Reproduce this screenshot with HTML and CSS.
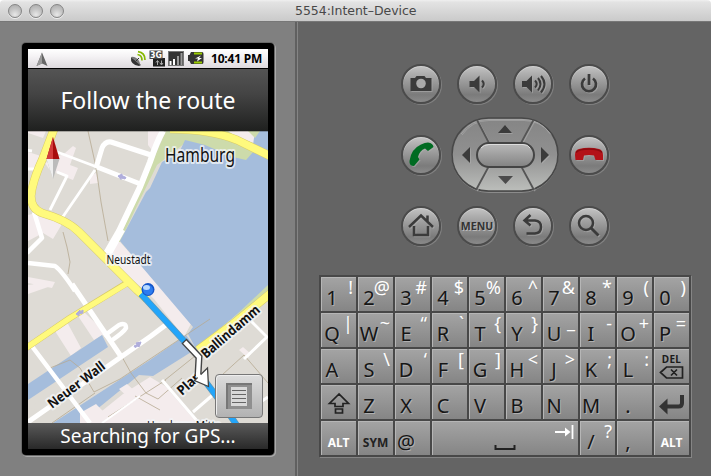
FILE: index.html
```html
<!DOCTYPE html>
<html lang="en">
<head>
<meta charset="utf-8">
<title>5554:Intent-Device</title>
<link rel="stylesheet" href="styles.css">
</head>
<body>
<div class="window">
  <header class="titlebar">
    <div class="lights"><i></i><i></i><i></i></div>
    <span class="title">5554:Intent–Device</span>
  </header>
  <main class="content">
    <section class="left">
      <div class="phone">
        <div class="status">
          <svg class="nav-icon" width="12" height="15" viewBox="0 0 12 15"><path d="M6 .5 11.500 14 6 11.500 .5 14Z" fill="#666"/><path d="M6 .5V11.500L.5 14Z" fill="#999"/></svg>
          <svg class="status-icons" width="74" height="18" viewBox="130 50 74 18">
            <path d="M131 57q-1 8 8 9l2-1z" fill="#333"/><path d="M131 57l9 8q0-4-3-6.500-3-2.500-6-1.500z" fill="#777"/><path d="M136 61l3-3" stroke="#333"/>
            <g fill="none" stroke="#86b800" stroke-width="1.700"><path d="M137.500 54.500q4.500.5 4.500 6"/><path d="M138 51.700q7 .8 7 8.300"/></g>
            <rect x="153" y="58" width="12" height="8.500" fill="#222"/><rect x="149.500" y="50.500" width="13" height="8.500" fill="#444"/>
            <text x="150" y="58" class="g3" textLength="12" lengthAdjust="spacingAndGlyphs">3G</text>
            <path d="M157.500 65v-4m-1.500 1.500 1.500-2 1.500 2M161.500 60.500v4m-1.500-1.500 1.500 2 1.500-2" stroke="#aaa" fill="none"/>
            <rect x="168" y="51" width="16" height="15" fill="#333"/><rect x="168.500" y="51.500" width="15" height="14" fill="none" stroke="#777"/>
            <path d="M169.500 61h2v4h-2zM173 59h2v6h-2z" fill="#fff"/><path d="M177 56h2v9h-2zM180.500 53h2v12h-2z" fill="#999"/>
            <path d="M191 52h11q1.500 0 1.500 2v8q0 2-1.500 2h-11l-1.500-3h-1.500v-6h1.500z" fill="#333"/><path d="M194 53.500h8M194 62.500h8" stroke="#9c0" stroke-width="2"/><path d="M201 55.500l-6 3h3l-1 3 5-3.500h-3z" fill="#fff"/>
          </svg>
          <span class="clock">10:41 PM</span>
        </div>
        <div class="instruction"><span>Follow the route</span></div>
        <div class="mapwrap">
        <svg class="map" width="240" height="292" viewBox="28 131 240 292">
          <rect x="28" y="131" width="240" height="292" fill="#dedbd5"/>
          <g fill="#f4eced">
            <path d="M28 131h18l-3 7-15-5zM28 152l13 4-5 14-8-2zM45 163l20-10 8-7 3 2-6 17 8 3-5 12-10-4-14-7zM28 215l8-2 16 3 10 8-9 15-10-6-15 8zM90 176l6-3 2 10-8 1zM28 277l27 5-3 6-24-5zM118 240l2 2 72 80-8 15-30-38-50-45zM148 145v-14h16l-10 22zM55 331l12-9 14 26-10 8zM78 316l6-4 22 21-12 7zM123 394l27-17 15 9 32 37H87zM28 285l15-2 8 3-23 8z"/>
          </g>
          <path d="M166 131h102v36l-25-6-58-18-28 22-22 45-15 32-2 0 21-50z" fill="#cddbab"/>
          <path d="M185 140l20 5 28 12 13 3 9-10 13 6v132l-72 61-8-15 5-7-73-86 26-49 4-4 12-26 17-9z" fill="#a5bddc"/>
          <path d="M228 131h32l-6 12-16-5z" fill="#f4eced"/><path d="M255 131h13v21l-15-7z" fill="#a5bddc"/><path d="M248 131h12l-5 7z" fill="#cddbab"/>
          <path d="M28 384l74-49 6 12-80 53zM53 423l97-63 36-25 10 14-43 27-14-1-59 48z" fill="#a5bddc"/>
          <path d="M28 408l45-28 11-3 8 9-40 27z" fill="#dedbd5"/>
          <path d="M197 346l36-28 35-33v12l-65 55z" fill="#cddbab"/>
          <path d="M119 389l8-5 10 9-8 5zM80 413l16-9 12 12-8 7H80zM239 350l4-3 8 7-3 4z" fill="#f4eced"/>
          <path d="M88 131l8 36 5 35 7 39M63 232l4 15 3 15-2 12M50 368l20-8 10 8 14 24 26-13 90-60M108 417l58-37M121 355l10 18 15 20 12 6 24-21M52 423l43-30M222 375l22-20 24 28M160 410l-25-14M165 380l30-24" fill="none" stroke="#b6aa92" stroke-width=".8"/>
          <g fill="none" stroke="#fff" stroke-width="4" stroke-linejoin="round">
            <path d="M96 168l6-20q3-7 9-6l43 14M97 167l46 18" stroke-width="5"/>
            <path d="M26 150l6 1M57 152l40 15M26 169h11M57 172l10 4-17 34M95 170l-33 48" stroke-width="2.800"/>
            <path d="M28 263l27 3q7 5 20 25M34 212l8 26-15 15M31 345l59 78" stroke-width="4.500"/>
            <path d="M72 284l48 71M28 422l123-86 16-12" stroke-width="5"/>
            <path d="M104 336l15-11q7-3 7 3-2 4-15 13" stroke-width="4.500"/>
            <path d="M102 423l38-27" stroke-width="2"/>
            <path d="M162 380l36 42M193 412l22-19M244 359l24-23M251 321l17 17M262 401l6-4" stroke-width="3"/>
          </g>
          <path d="M163 131q-6 10-13 31l-10 25-21 44-15 26" fill="none" stroke="#fff" stroke-width="6"/>
          <path d="M102 258l17-30 6 3-14 25z" fill="#fff"/>
          <g fill="none" stroke-linejoin="round">
            <g stroke="#d9cc68"><path d="M54 129 43 158Q32 182 31 196 31 209 42 213 67 220 79 232L137 290 147 299" stroke-width="8.500"/><path d="M26 348 70 318 127 283" stroke-width="6.500"/><path d="M170 129q40 0 67 11l33 16M198 350l35-26 38-31" stroke-width="8.500"/></g>
            <g stroke="#fffa7d"><path d="M54 129 43 158Q32 182 31 196 31 209 42 213 67 220 79 232L137 290 147 299" stroke-width="7.500"/><path d="M26 348 70 318 131 281" stroke-width="5.500"/><path d="M170 129q40 0 67 11l33 16M198 350l35-26 38-31" stroke-width="7.500"/></g>
          </g>
          <path d="M118 176l4-2v1.500l4 2-1 1.500-4-1v1.500zM76 314l4-4v2l3-2v3l-4 1v2zM141 342l-5 1 1 1.500-3 1.500 1 1.500 3-1.500 1 1z" fill="#afaddb" stroke="#afaddb"/>
          <path d="M141 294l44 48M205 381l18 24 15 22" stroke="#5999bd" stroke-width="6.500" fill="none"/>
          <path d="M141 294l44 48M205 381l18 24 15 22" stroke="#22a5fa" stroke-width="5" fill="none"/>
          <g class="label"><text class="city" x="165" y="162" textLength="70" lengthAdjust="spacingAndGlyphs">Hamburg</text>
          <text class="area" x="106.500" y="264" textLength="44" lengthAdjust="spacingAndGlyphs">Neustadt</text>
          <text class="street" transform="translate(52 409) rotate(-37)" textLength="68" lengthAdjust="spacingAndGlyphs">Neuer Wall</text>
          <text class="street" transform="translate(206 359) rotate(-41)" textLength="73" lengthAdjust="spacingAndGlyphs">Ballindamm</text>
          <text class="street" transform="translate(182 396) rotate(-42)" textLength="28" lengthAdjust="spacingAndGlyphs">Plan</text>
          <text class="area" x="147" y="430" textLength="74" lengthAdjust="spacingAndGlyphs">Hamburg Mitte</text></g>
          <path d="M184 341l15 16-1 18" fill="none" stroke="#444" stroke-width="7"/><path d="M208.500 386.500l-14-6 13-12.500z" fill="#fff" stroke="#444" stroke-width="1.300"/><path d="M184.800 342l14.200 15-1 18 4 4" fill="none" stroke="#fff" stroke-width="4.200"/>
          <circle cx="148" cy="289.500" r="6.500" fill="#1455c9"/><circle cx="148" cy="290" r="5" fill="#2c7cf0"/><ellipse cx="146.500" cy="287.500" rx="3.500" ry="2.500" fill="#b9daff"/>
          <path d="M53 137l-6.500 22h13z" fill="#a80d0d"/><path d="M53 137l-6.500 22H53z" fill="#d23c3c"/><path d="M46.500 159h13L53 179z" fill="#bbb"/><path d="M46.500 159H53v20z" fill="#eee"/>
          <path d="M28 131.500h240" stroke="#000" stroke-opacity=".25"/>
        </svg>
        <div class="list-button"><svg width="26" height="26" viewBox="0 0 26 26"><path d="M0 0h26v26H0z" fill="#8f8f8f"/><path d="M1 26V1H26" fill="none" stroke="#777" stroke-width="2"/><path d="M5 4h16v19H5z" fill="#d9d9d9"/><path d="M6 7.500h14M6 11.500h14M6 15.500h14M6 19.500h14" stroke="#666" stroke-width="1.200"/></svg></div>
        </div>
        <div class="gps"><span>Searching for GPS...</span></div>
      </div>
    </section>
    <section class="right">
      <div class="controls">
        <div class="round"><svg viewBox="0 0 40 40"><path d="M9.500 14h4.500l1.500-2h8l1.500 2h5.500v13H9.500z" fill="#3b3b3b"/><circle cx="20" cy="19.500" r="4.800" fill="#aaa"/></svg></div>
        <div class="round"><svg viewBox="0 0 40 40"><path d="M12.500 17h4.500l5.500-5.500v17L17 23h-4.500z" fill="#3b3b3b"/><path d="M25 16.500q3.500 3.500 0 7" fill="none" stroke="#3b3b3b" stroke-width="2"/></svg></div>
        <div class="round"><svg viewBox="0 0 40 40"><path d="M9 17h4.500l5.500-5.500v17L13.500 23H9z" fill="#3b3b3b"/><path d="M22 16.500q3.500 3.500 0 7M25 14q5 6 0 12.500M28 12q7 8 0 16.500" fill="none" stroke="#3b3b3b" stroke-width="2"/></svg></div>
        <div class="round"><svg viewBox="0 0 40 40"><path d="M16 14.500a7 7 0 1 0 8 0M20 10v11" fill="none" stroke="#3b3b3b" stroke-width="2.700"/></svg></div>

        <div class="round"><svg viewBox="0 0 40 40"><path d="M27 7.500Q32 8 32.500 12L27 16 24 13.500Q18.500 15.500 17 22L18.500 24.500 13 31Q8 31 8.500 26 10 14 20 9.500 24 7.500 27 7.500Z" fill="#006b22"/></svg></div>
        <div class="dpad"><svg width="108" height="76" viewBox="0 0 108 76">
          <defs><linearGradient id="ring" x1="0" y1="0" x2="0" y2="1"><stop offset="0" stop-color="#858585"/><stop offset=".5" stop-color="#909090"/><stop offset="1" stop-color="#bcbebb"/></linearGradient><linearGradient id="pill" x1="0" y1="0" x2="0" y2="1"><stop offset="0" stop-color="#bbb"/><stop offset="1" stop-color="#828282"/></linearGradient></defs>
          <rect x="1" y="1.500" width="106" height="74" rx="37" fill="none" stroke="#8b8b8b"/>
          <rect x="1" y="1" width="106" height="73" rx="36.500" fill="url(#ring)" stroke="#484848" stroke-width="1.600"/>
          <path d="M10 17Q20 2.500 37 2.500h35q17 0 27 14" fill="none" stroke="#a5a5a5"/>
          <path d="M26 3l12 23M82.500 3L70 26M38 49L25 73M70 49l13 24" stroke="#555" stroke-width="1.800"/>
          <rect x="26" y="26" width="57" height="24" rx="12" fill="url(#pill)" stroke="#444" stroke-width="2"/>
          <path d="M30 31q3-3.500 8-3.500h34q5 0 7 3.500" fill="none" stroke="#ddd"/>
          <path d="M47 16l7-8 7 8zM11 38l8-8v16zM98 38l-8-8v16z" fill="#3b3b3b"/><path d="M47 59h15l-7.500 8z" fill="#4b4b4b"/>
        </svg></div>
        <div class="round c4"><svg viewBox="0 0 40 40"><path d="M6 20q0-5 4-6 10-2.500 20 0 4 1 4 6.500v4.500h-7.500L25 20.500q-5-1-10 0L14 25H6.500z" fill="#b31218"/><path d="M7 17.500q3-3.500 13-3.500t13 3.500" fill="none" stroke="#8b0c10" stroke-width="1.500"/></svg></div>

        <div class="round"><svg viewBox="0 0 40 40"><path d="M8 21l12-11.500L32 21M13 20v9h14v-9M26.500 9.500v6" fill="none" stroke="#3b3b3b" stroke-width="2.500"/></svg></div>
        <div class="round"><span class="menu">MENU</span></div>
        <div class="round"><svg viewBox="0 0 40 40"><path d="M13.500 27.500H22q6-.5 6-6.500 0-6-6-6.500H12M17.500 9l-6 5.500 6 5" fill="none" stroke="#3b3b3b" stroke-width="2.500"/></svg></div>
        <div class="round"><svg viewBox="0 0 40 40"><circle cx="17" cy="17" r="7" fill="none" stroke="#3b3b3b" stroke-width="2.500"/><path d="M22 22l7.500 7.500" stroke="#3b3b3b" stroke-width="3"/></svg></div>
      </div>

      <div class="keyboard">
        <div class="key"><b>1</b><i>!</i></div><div class="key"><b>2</b><i>@</i></div><div class="key"><b>3</b><i>#</i></div><div class="key"><b>4</b><i>$</i></div><div class="key"><b>5</b><i>%</i></div><div class="key"><b>6</b><i>^</i></div><div class="key"><b>7</b><i>&amp;</i></div><div class="key"><b>8</b><i>*</i></div><div class="key"><b>9</b><i>(</i></div><div class="key"><b>0</b><i>)</i></div>
        <div class="key"><b>Q</b><i>|</i></div><div class="key"><b>W</b><i>~</i></div><div class="key"><b>E</b><i>“</i></div><div class="key"><b>R</b><i>`</i></div><div class="key"><b>T</b><i>{</i></div><div class="key"><b>Y</b><i>}</i></div><div class="key"><b>U</b><i class="raise">_</i></div><div class="key"><b>I</b><i>-</i></div><div class="key"><b>O</b><i>+</i></div><div class="key"><b>P</b><i>=</i></div>
        <div class="key"><b>A</b></div><div class="key"><b>S</b><i>\</i></div><div class="key"><b>D</b><i>‘</i></div><div class="key"><b>F</b><i>[</i></div><div class="key"><b>G</b><i>]</i></div><div class="key"><b>H</b><i>&lt;</i></div><div class="key"><b>J</b><i>&gt;</i></div><div class="key"><b>K</b><i>;</i></div><div class="key"><b>L</b><i>:</i></div>
        <div class="key del"><span>DEL</span><svg width="25" height="13" viewBox="0 0 25 13"><path d="M1.500 6.500l6-5.500H23.500v11H7.500zM12 3.500l6 6M18 3.500l-6 6" fill="none" stroke="#222" stroke-width="1.700"/></svg></div>
        <div class="key"><svg width="35" height="34" viewBox="0 0 35 34"><path d="M18 9l-9.500 9.500H14v3h8v-3h5.500zM14.500 24h7v4h-7z" fill="none" stroke="#222" stroke-width="1.700"/></svg></div><div class="key"><b>Z</b></div><div class="key"><b>X</b></div><div class="key"><b>C</b></div><div class="key"><b>V</b></div><div class="key"><b>B</b></div><div class="key"><b>N</b></div><div class="key"><b>M</b></div><div class="key"><b>.</b></div><div class="key"><svg width="35" height="34" viewBox="0 0 35 34"><path d="M28 10v8q0 3.500-3.500 3.500H12" fill="none" stroke="#333" stroke-width="4"/><path d="M5 21.500l8.500-8v16z" fill="#333"/></svg></div>
        <div class="key word white"><span>ALT</span></div><div class="key word"><span>SYM</span></div><div class="key"><b>@</b></div>
        <div class="key space"><svg width="146" height="34" viewBox="0 0 146 34"><path d="M63.500 24v4h19v-4" fill="none" stroke="#222" stroke-width="2"/><path d="M123 11h14M140.500 4v14" stroke="#fff" stroke-width="1.800"/><path d="M133 6.500l5.500 4.500-5.500 4.500z" fill="#fff"/></svg></div>
        <div class="key"><b>/</b><i>?</i></div><div class="key"><b>,</b></div><div class="key word white"><span>ALT</span></div>
      </div>
    </section>
  </main>
</div>
</body>
</html>
```
FILE: styles.css
```css
* { box-sizing: border-box; }
body { margin: 0; background: #fff; overflow: hidden; font-family: "Noto Sans", "Open Sans", sans-serif; }
svg { display: block; }
.window { width: 711px; height: 476px; display: flex; flex-direction: column; border-radius: 4px 4px 0 0; overflow: hidden; }
.titlebar { height: 22px; flex: none; display: flex; align-items: center; background: linear-gradient(#f0f0f0, #e3e3e3 10%, #cacaca); border-bottom: 1px solid #777; }
.lights { display: flex; gap: 7px; padding-left: 8px; width: 295px; }
.lights i { width: 14px; height: 14px; border-radius: 50%; border: 1px solid #858585; background: radial-gradient(circle at 50% 80%, #e8e8e8, #c4c4c4 50%, #a8a8a8); box-shadow: 0 1px #eee; }
.title { font: 12.5px "DejaVu Sans", sans-serif; color: #484848; white-space: nowrap; letter-spacing: -.03px; }
.content { flex: 1; display: flex; min-height: 0; }
.left { width: 297px; background: #808080; border-right: 2px solid #606060; padding: 21px 0 0 22px; }
.phone { width: 252px; height: 412px; background: #000; border-radius: 4px; padding: 6px; box-shadow: 0 0 0 1px #686868, 1px 1px 0 1px #aaa; }
.status { height: 20px; display: flex; align-items: center; background: linear-gradient(#fff, #f4f2f4 40%, #dedade); border-bottom: 1px solid #000; }
.nav-icon { margin: 1px 0 0 8px; }
.status-icons { margin-left: 82px; }
.g3 { font: bold 9px "DejaVu Sans", sans-serif; fill: #fff; }
.clock { margin-left: 7px; font-weight: bold; font-size: 12px; line-height: 18px; white-space: nowrap; letter-spacing: -.2px; color: #000; }
.instruction { height: 62px; display: flex; align-items: center; justify-content: center; background: linear-gradient(#545454, #444 40%, #1f201f); color: #fff; font-size: 23px; white-space: nowrap; }
.mapwrap { display: grid; height: 292px; }
.mapwrap > * { grid-area: 1 / 1; }
.city { font-size: 20px; }
.area { font-size: 12px; }
.street { font-size: 13.5px; font-weight: bold; }
.label text { fill: #111; stroke: #f3f5f7; stroke-opacity: .75; stroke-width: 4px; paint-order: stroke; stroke-linejoin: round; }
.list-button { justify-self: end; align-self: end; width: 48px; height: 44px; margin: 0 5px 5px 0; border: 1px solid #777; border-radius: 4px; background: linear-gradient(#ddd, #b2b2b2); box-shadow: inset 1px 1px #eee; display: flex; align-items: center; justify-content: center; }
.gps { height: 26px; display: flex; align-items: center; justify-content: center; background: linear-gradient(#5a5a5a, #292929); color: #fff; font-size: 19px; line-height: 26px; white-space: nowrap; }
.right { flex: 1; background: #646464; border-left: 1px solid #858585; padding: 42px 0 0 21px; }
.controls { display: grid; grid-template-columns: repeat(4, 40px); column-gap: 16px; row-gap: 31px; grid-auto-rows: 40px; margin-left: 82px; }
.round { width: 40px; height: 40px; border-radius: 50%; border: 2px solid #4b4b4b; background: linear-gradient(#c4c4c4, #ababab 25%, #7b7b7b 80%, #8a8a8a); box-shadow: 1px 1px 0 #808080, inset 0 1px #d2d2d2; display: flex; align-items: center; justify-content: center; }
.round svg { width: 40px; height: 40px; flex: none; }
.round svg, .dpad path { filter: drop-shadow(1px 1px 0 #b3b3b388); }
.c4 { grid-column: 4; }
.dpad { grid-column: span 2; margin: -18px 0 0 -6px; width: 108px; height: 76px; }
.menu { font-size: 10.5px; font-weight: bold; color: #333; text-shadow: 1px 1px #bbb; }
.keyboard { display: grid; grid-template-columns: repeat(10, 35px); grid-auto-rows: 34px; gap: 2px; padding: 2px; width: 372px; background: #484848; box-shadow: 1px 1px #858585; margin-top: 29px; }
.key { display: grid; align-content: start; height: 34px; min-width: 0; background: linear-gradient(#a4a4a4, #858585); box-shadow: inset 1px 1px #b6b6b6; }
.key > b, .key > i { grid-area: 1 / 1; font-weight: normal; font-style: normal; line-height: 20px; }
.key > b { width: 22px; font-size: 20px; color: #161616; margin-top: 11px; text-shadow: 1px 1px #b0b0b0; display: flex; justify-content: center; }
.key > i { justify-self: end; font-size: 18px; color: #fff; margin: 0 3px 0 0; text-shadow: 1px 1px #909090; }
.key > .raise { margin-top: -2px; }
.space { grid-column: span 4; }
.word { justify-items: center; }
.word span { font-size: 12px; font-weight: bold; line-height: 16px; margin-top: 14px; color: #222; }
.word.white span { color: #fff; }
.del { justify-items: center; }
.del span { font-size: 10px; font-weight: bold; line-height: 14px; color: #1c1c1c; letter-spacing: .3px; margin-top: 3px; }
```
